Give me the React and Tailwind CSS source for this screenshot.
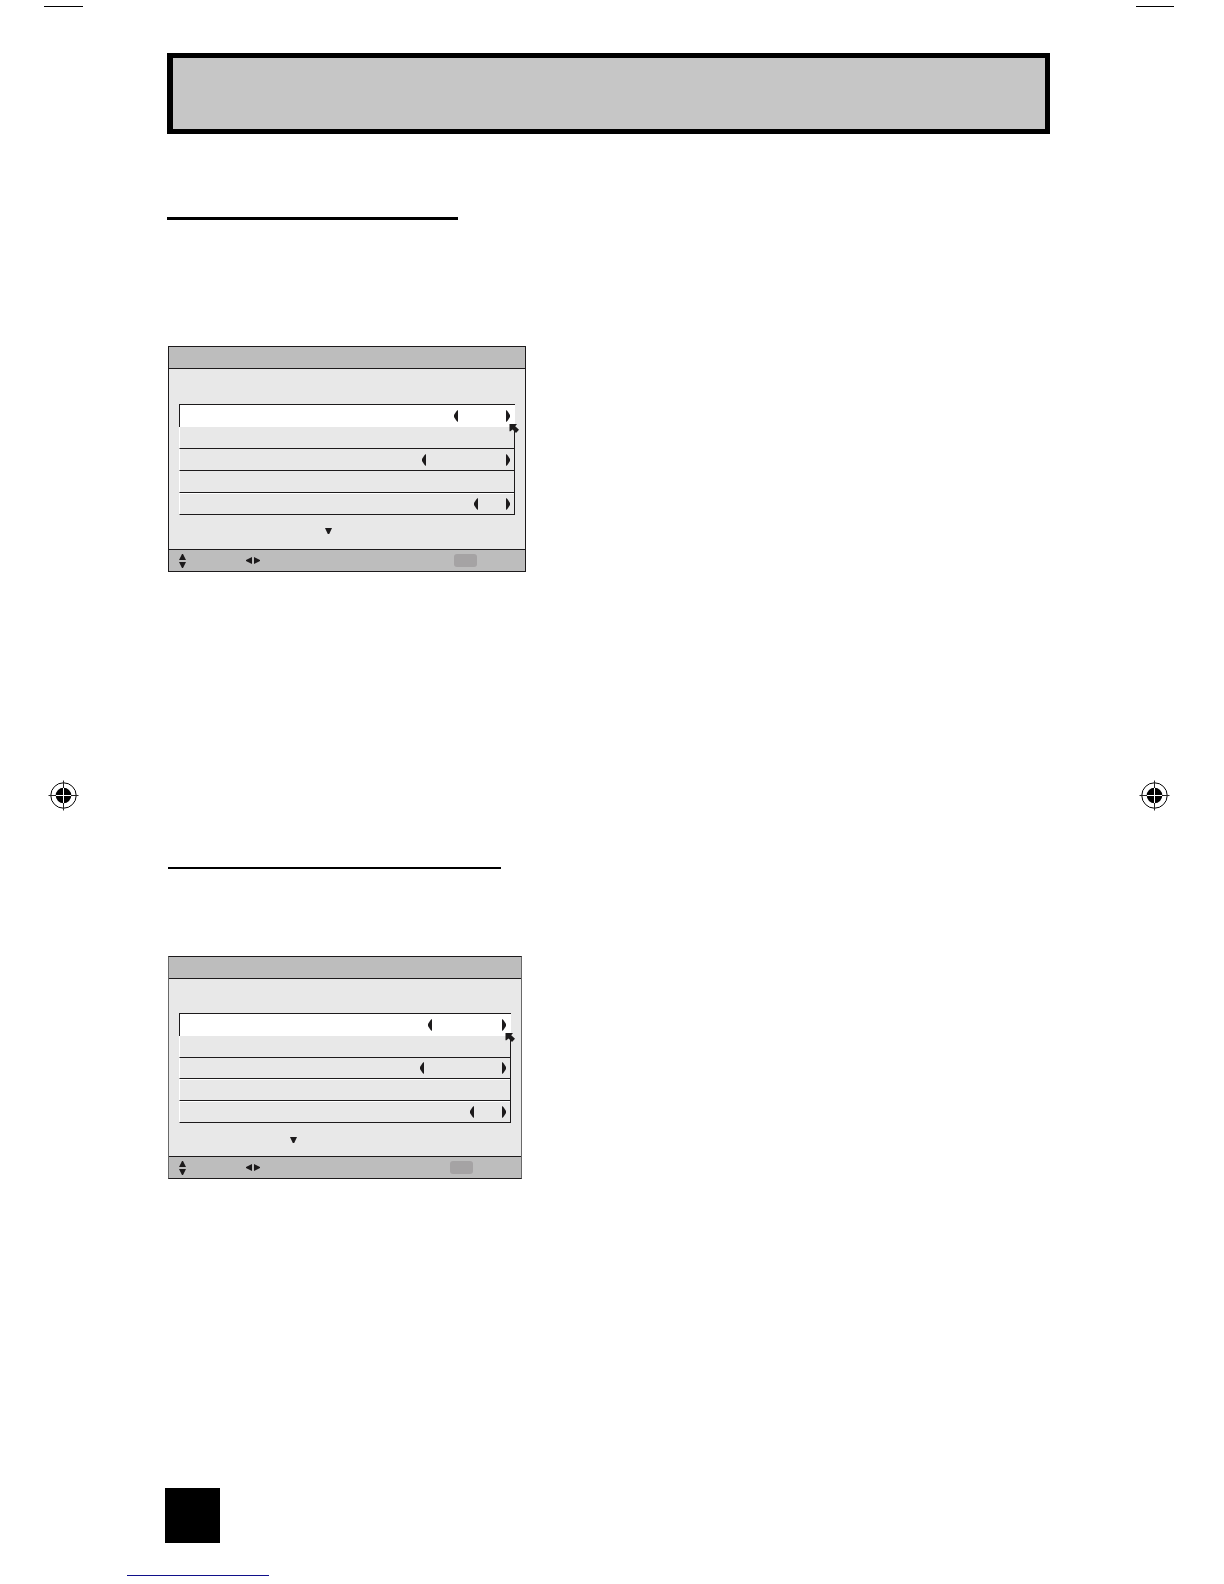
const INK = "#1c1a1b";

function RegistrationMark({ className }) {
  return (
    <svg className={className} width="31" height="31" viewBox="0 0 31 31" fill="none" aria-hidden="true">
      <circle cx="15.5" cy="15.5" r="12.7" stroke="#000" strokeWidth="1" />
      <path d="M0.5 15.5H30.5M15.5 0.5V30.5" stroke="#222" strokeWidth="1" />
      <circle cx="15.5" cy="15.5" r="7.8" fill="#000" />
      <path d="M8 15.5H23M15.5 8V23" stroke="#fff" strokeWidth="1" />
    </svg>
  );
}

function LeftArrow() {
  return (
    <svg className="block" width="4" height="12" viewBox="0 0 4 12" aria-hidden="true">
      <path d="M4 0V12L2.6 11L0 7V5L2.6 1Z" fill={INK} />
    </svg>
  );
}

function RightArrow() {
  return (
    <svg className="block" width="4" height="12" viewBox="0 0 4 12" aria-hidden="true">
      <path d="M0 0V12L1.4 11L4 7V5L1.4 1Z" fill={INK} />
    </svg>
  );
}

function Stepper({ className }) {
  return (
    <div className={`flex justify-between ${className}`}>
      <button type="button" aria-label="Previous value"><LeftArrow /></button>
      <button type="button" aria-label="Next value"><RightArrow /></button>
    </div>
  );
}

function Pointer() {
  return (
    <svg className="absolute right-[-4px] top-[19px] z-10" width="10" height="9" viewBox="0 0 10 9" aria-hidden="true">
      <path d="M0.5 0H8L6.2 2.2L10 5.8L7 9L3.6 5.4L1 7.4L0.5 7Z" fill={INK} />
    </svg>
  );
}

function Row({ className, stepper }) {
  return (
    <li className={`flex items-center justify-end border-b border-r border-l border-[#1c1a1b] border-l-white pr-1 ${className}`}>
      {stepper && <Stepper className={stepper} />}
    </li>
  );
}

function MenuPanel({ className, bodyClass, rows, selected, more }) {
  return (
    <section className={`ml-[3px] max-w-full border border-[#1c1a1b] bg-[#e8e8e8] ${className}`}>
      <div className="h-[22px] border-b border-[#1c1a1b] bg-[#bdbdbd]" />
      <div className={`px-[10px] ${bodyClass}`}>
        <ul>
          <li className="relative flex h-[23px] items-center justify-end border-l border-t border-[#1c1a1b] bg-white pr-[5px]">
            <Stepper className={selected} />
            <Pointer />
          </li>
          {rows.map((row, i) => (
            <Row key={i} {...row} />
          ))}
        </ul>
      </div>
      <div className={`flex items-start ${more}`}>
        <svg className="block" width="7" height="6" viewBox="0 0 7 6" aria-hidden="true">
          <path d="M0 0H7L4.2 6H2.8Z" fill={INK} />
        </svg>
      </div>
      <div className="flex h-[22px] items-center border-t border-[#1c1a1b] bg-[#bdbdbd] pl-[10px]">
        <svg className="block" width="7" height="14" viewBox="0 0 7 14" aria-hidden="true">
          <path d="M0 6L3 0H4L7 6ZM0 8L3 14H4L7 8Z" fill={INK} />
        </svg>
        <svg className="ml-[60px] block" width="14" height="7" viewBox="0 0 14 7" aria-hidden="true">
          <path d="M6 0V7L0 4V3ZM8 0V7L14 4V3Z" fill={INK} />
        </svg>
        <span className="ml-auto mr-12 h-[13px] w-[23px] rounded-[3px] bg-[#a5a3a4]" />
      </div>
    </section>
  );
}

const firstRows = [
  { className: "h-[22px]" },
  { className: "h-[22px]", stepper: "w-[88px]" },
  { className: "h-[22px]" },
  { className: "h-[22px] shadow-[inset_0_1px_0_#fff]", stepper: "w-9" },
];

const secondRows = [
  { className: "h-[22px]" },
  { className: "h-[21px]", stepper: "w-[86px]" },
  { className: "h-[22px] shadow-[inset_0_1px_0_#fff]" },
  { className: "h-[22px] shadow-[inset_0_1px_0_#fff]", stepper: "w-9" },
];

export default function App() {
  return (
    <div className="grid grid-cols-[165px_1fr_174px] bg-white font-['Liberation_Sans',sans-serif]">
      <aside className="pt-[6px]">
        <div className="ml-11 h-px w-[39px] bg-black" />
        <RegistrationMark className="ml-12 mt-[773px] block" />
      </aside>

      <main className="min-w-0 pt-[53px]">
        <header className="ml-[2px] h-[81px] border-[5px] border-l-[6px] border-black bg-[#c6c6c6]" />
        <div className="ml-[2px] mt-[83px] h-[3px] w-[291px] max-w-full bg-black" />
        <MenuPanel
          className="mt-[126px] w-[358px]"
          bodyClass="pt-[35px]"
          selected="w-14"
          rows={firstRows}
          more="h-[34px] pl-[156px] pt-[13px]"
        />
        <div className="ml-[3px] mt-[295px] h-[2px] w-[333px] max-w-full bg-black" />
        <MenuPanel
          className="mt-[87px] w-[354px] border-x-[#686868]"
          bodyClass="pt-[34px]"
          selected="w-[78px]"
          rows={secondRows}
          more="h-[33px] pl-[121px] pt-[14px]"
        />
        <div className="mt-[309px] size-[55px] bg-black" />
      </main>

      <aside className="pt-[6px]">
        <div className="ml-[86px] h-px w-[38px] bg-black" />
        <RegistrationMark className="ml-[89px] mt-[773px] block" />
      </aside>

      <footer className="col-span-3 pb-2 pl-[127px] pt-8">
        <div className="h-px w-[142px] bg-[#10108a]" />
      </footer>
    </div>
  );
}
